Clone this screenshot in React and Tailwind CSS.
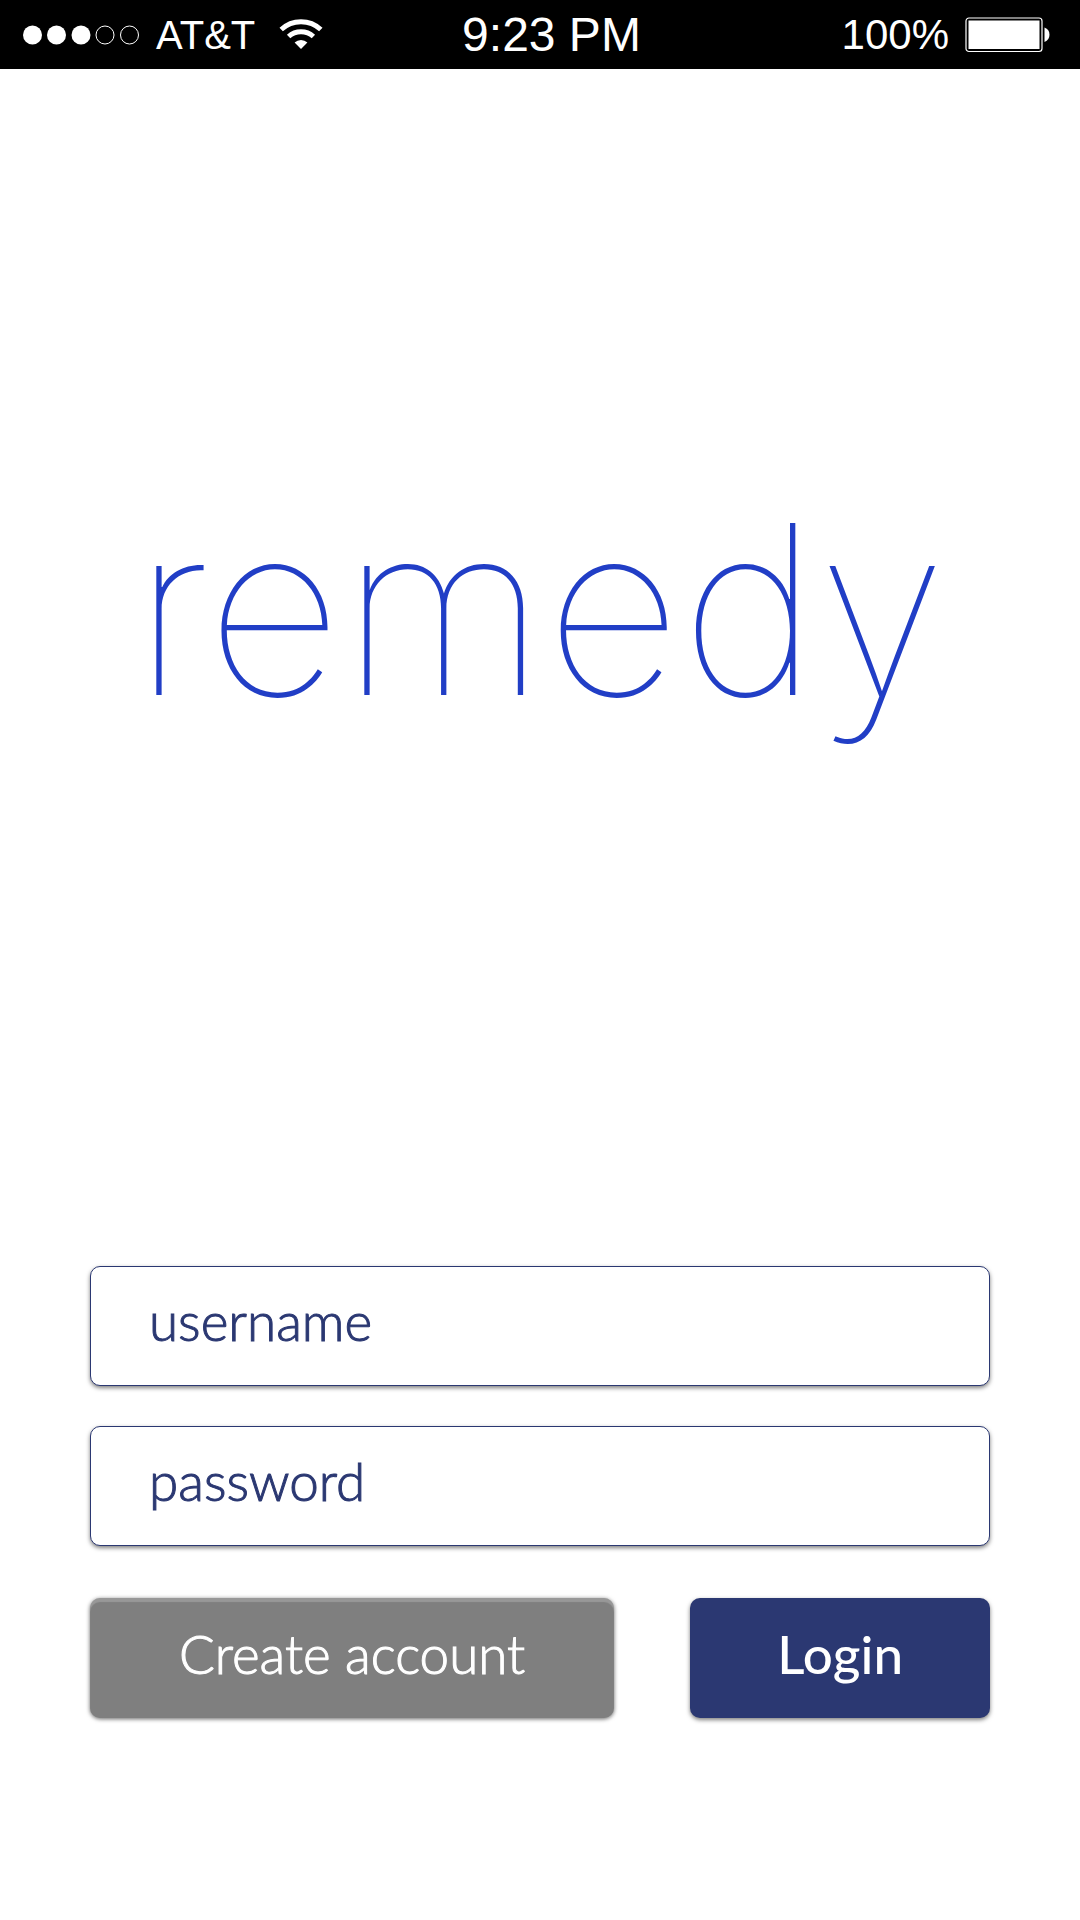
import React from "react";

function SignalDots() {
  return (
    <svg width="117" height="20" viewBox="0 0 117 20" aria-hidden="true">
      <g fill="white">
        <circle cx="9.5" cy="10" r="9.5" />
        <circle cx="33.5" cy="10" r="9.5" />
        <circle cx="58" cy="10" r="9.5" />
      </g>
      <g fill="none" stroke="white" strokeWidth="1">
        <circle cx="82" cy="10" r="9" />
        <circle cx="106.5" cy="10" r="9" />
      </g>
    </svg>
  );
}

function WifiIcon() {
  return (
    <svg width="44" height="31" viewBox="0 0 44 31" aria-hidden="true">
      <g fill="none" stroke="white" strokeWidth="5">
        <path d="M2.2 10.5A29 29 0 0 1 41.8 10.5" />
        <path d="M9.6 17.5A18.5 18.5 0 0 1 34.4 17.5" />
      </g>
      <path d="M15.6 23.500A9.2 9.2 0 0 1 28.4 23.500L22 30Z" fill="white" />
    </svg>
  );
}

function BatteryIcon() {
  return (
    <svg width="86" height="36" viewBox="0 0 86 36" aria-hidden="true">
      <rect x="1" y="1" width="76" height="33.5" rx="3" fill="none" stroke="white" strokeWidth="1.2" />
      <rect x="3.5" y="3.5" width="71" height="28.5" fill="white" />
      <path d="M79.5 10.5Q84.5 12.5 84.5 17.7T79.5 25Z" fill="white" />
    </svg>
  );
}

function StatusBar() {
  return (
    <header className="grid h-[69px] grid-cols-[1fr_auto_1fr] items-center bg-black pl-[23px] font-['Liberation_Sans',sans-serif] text-[42px] leading-none text-white">
      <div className="flex items-center">
        <SignalDots />
        <span className="ml-4 text-[40px]">AT&amp;T</span>
        <span className="ml-6">
          <WifiIcon />
        </span>
      </div>
      <time className="text-[48px]">9:23 PM</time>
      <div className="flex items-center justify-end gap-4 pr-[29px]">
        <span>100%</span>
        <BatteryIcon />
      </div>
    </header>
  );
}

function Field({ name, type }) {
  return (
    <input
      name={name}
      type={type}
      aria-label={name}
      placeholder={name}
      className="block h-[120px] w-full rounded-[10px] border border-[#2b3872] bg-white px-[58px] pb-3 text-[53px] font-light text-[#2b3872] shadow-[0_2px_4px_rgba(0,0,0,0.5)] outline-none [-webkit-text-stroke:1px] placeholder:text-[#2b3872] placeholder:opacity-100"
    />
  );
}

export default function App() {
  return (
    <div className="flex min-h-screen flex-col bg-white font-['Lato',sans-serif]">
      <StatusBar />
      <main className="flex flex-1 flex-col px-[90px]">
        <h1 className="pt-[390px] text-center font-['Inter',sans-serif] text-[236px] leading-[300px] font-thin text-[#213ec6]">remedy</h1>
        <form className="mt-auto mb-[202px] flex flex-col gap-10" onSubmit={(e) => e.preventDefault()}>
          <Field name="username" type="text" />
          <Field name="password" type="password" />
          <div className="mt-3 flex justify-between gap-[76px]">
            <button
              type="button"
              className="h-[120px] flex-[7] rounded-[10px] bg-[#7f7f7f] pb-2 text-[53px] font-light text-white shadow-[0_1px_4px_rgba(0,0,0,0.6),inset_0_4px_1px_rgba(255,255,255,0.2)] [-webkit-text-stroke:1px]"
            >
              Create account
            </button>
            <button
              type="submit"
              className="h-[120px] flex-[4] rounded-[10px] bg-[#2b3872] pb-2 text-[53px] font-medium text-white shadow-[0_2px_4px_rgba(0,0,0,0.5)]"
            >
              Login
            </button>
          </div>
        </form>
      </main>
    </div>
  );
}
